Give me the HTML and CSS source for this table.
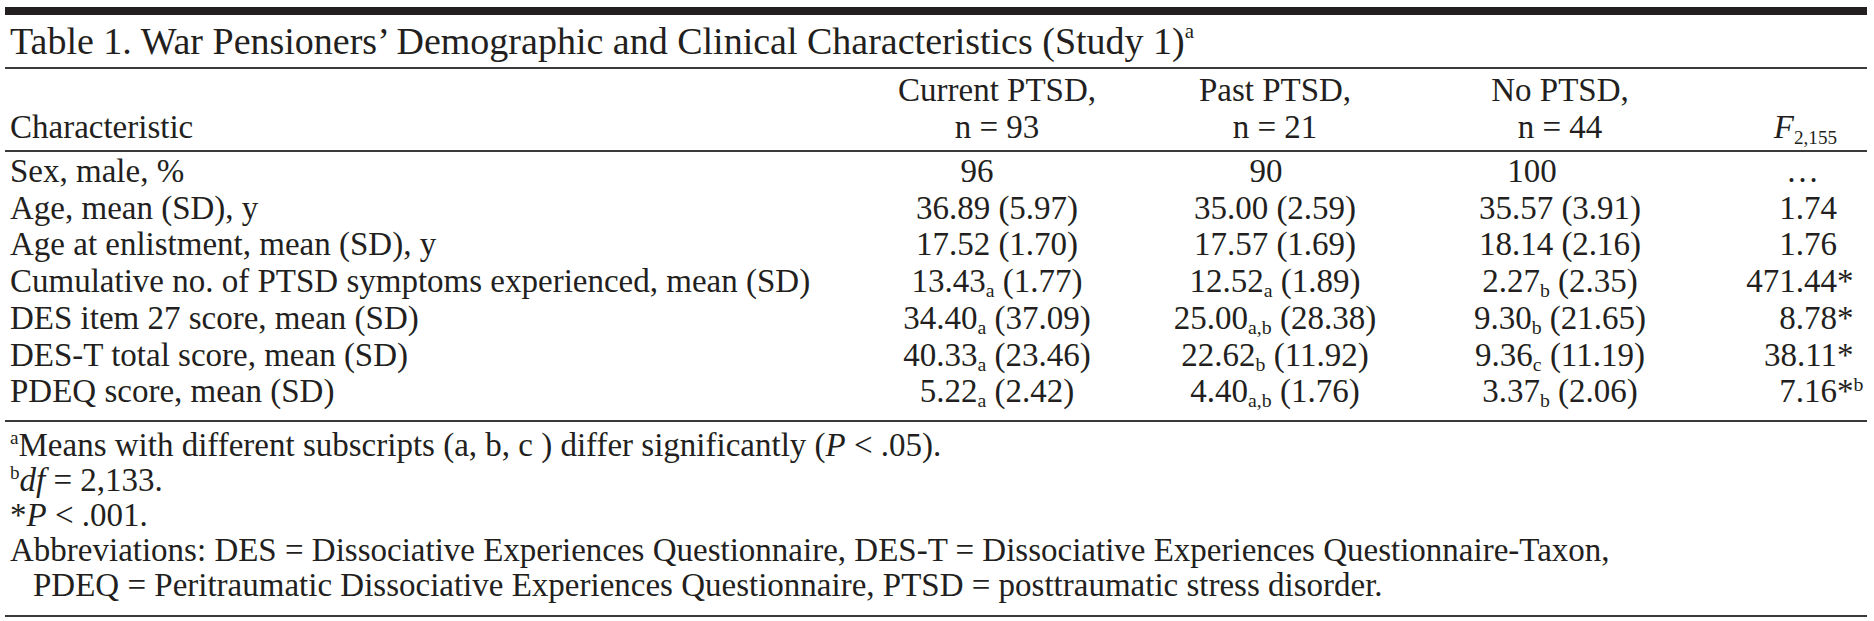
FILE: index.html
```html
<!DOCTYPE html>
<html lang="en">
<head>
<meta charset="utf-8">
<title>Table 1</title>
<link rel="stylesheet" href="styles.css">
</head>
<body>
<div class="page">
  <div class="topbar"></div>
  <h1 class="title">Table 1. War Pensioners’ Demographic and Clinical Characteristics (Study 1)<sup>a</sup></h1>
  <table class="data">
    <colgroup>
      <col class="c0"><col class="c1"><col class="c2"><col class="c3"><col class="c4">
    </colgroup>
    <thead>
      <tr>
        <th class="lbl">Characteristic</th>
        <th>Current PTSD,<br>n = 93</th>
        <th>Past PTSD,<br>n = 21</th>
        <th>No PTSD,<br>n = 44</th>
        <th class="fcol"><i>F</i><sub class="fsub">2,155</sub></th>
      </tr>
    </thead>
    <tbody>
      <tr>
        <td class="lbl">Sex, male, %</td>
        <td class="int-a">96</td><td class="int-b">90</td><td class="int-c">100</td>
        <td class="fcol"><span class="ell">…</span></td>
      </tr>
      <tr>
        <td class="lbl">Age, mean (SD), y</td>
        <td>36.89 (5.97)</td><td>35.00 (2.59)</td><td>35.57 (3.91)</td>
        <td class="fcol">1.74</td>
      </tr>
      <tr>
        <td class="lbl">Age at enlistment, mean (SD), y</td>
        <td>17.52 (1.70)</td><td>17.57 (1.69)</td><td>18.14 (2.16)</td>
        <td class="fcol">1.76</td>
      </tr>
      <tr>
        <td class="lbl">Cumulative no. of PTSD symptoms experienced, mean (SD)</td>
        <td>13.43<sub>a</sub> (1.77)</td><td>12.52<sub>a</sub> (1.89)</td><td>2.27<sub>b</sub> (2.35)</td>
        <td class="fcol">471.44<span class="hang">*</span></td>
      </tr>
      <tr>
        <td class="lbl">DES item 27 score, mean (SD)</td>
        <td>34.40<sub>a</sub> (37.09)</td><td>25.00<sub>a,b</sub> (28.38)</td><td>9.30<sub>b</sub> (21.65)</td>
        <td class="fcol">8.78<span class="hang">*</span></td>
      </tr>
      <tr>
        <td class="lbl">DES-T total score, mean (SD)</td>
        <td>40.33<sub>a</sub> (23.46)</td><td>22.62<sub>b</sub> (11.92)</td><td>9.36<sub>c</sub> (11.19)</td>
        <td class="fcol">38.11<span class="hang">*</span></td>
      </tr>
      <tr>
        <td class="lbl">PDEQ score, mean (SD)</td>
        <td>5.22<sub>a</sub> (2.42)</td><td>4.40<sub>a,b</sub> (1.76)</td><td>3.37<sub>b</sub> (2.06)</td>
        <td class="fcol">7.16<span class="hang">*<sup>b</sup></span></td>
      </tr>
    </tbody>
  </table>
  <div class="notes">
    <p><sup>a</sup>Means with different subscripts (a, b, c ) differ significantly (<i>P</i> &lt; .05).</p>
    <p><sup>b</sup><i>df</i> = 2,133.</p>
    <p>*<i>P</i> &lt; .001.</p>
    <p class="abbr">Abbreviations: DES = Dissociative Experiences Questionnaire, DES-T = Dissociative Experiences Questionnaire-Taxon,<br>PDEQ = Peritraumatic Dissociative Experiences Questionnaire, PTSD = posttraumatic stress disorder.</p>
  </div>
</div>
</body>
</html>
```

FILE: styles.css
```css
html, body {
  margin: 0;
  padding: 0;
  background: #ffffff;
}

body {
  font-family: "Liberation Serif", "Times New Roman", serif;
  color: #231f20;
}

.page {
  padding: 7px 7px 0 5px;
}

.topbar {
  height: 8px;
  background: #231f20;
}

.title {
  margin: 0;
  padding-left: 5px;
  font-size: 38px;
  font-weight: normal;
  line-height: 52px;
  white-space: nowrap;
  border-bottom: 2px solid #3a3a3a;
}

.title sup {
  font-size: 0.55em;
  line-height: 0;
  vertical-align: 0.75em;
}

.data {
  width: 100%;
  border-collapse: collapse;
  table-layout: fixed;
  font-size: 33px;
}

.c0 { width: 865px; }
.c1 { width: 254px; }
.c2 { width: 302px; }
.c3 { width: 268px; }
.c4 { width: 173px; }

.data th {
  font-weight: normal;
  line-height: 37px;
  padding: 3px 0 4px;
  vertical-align: bottom;
  text-align: center;
  border-bottom: 2px solid #3a3a3a;
}

.data td {
  line-height: 36.7px;
  padding: 0;
  text-align: center;
  white-space: nowrap;
}

.data .lbl {
  text-align: left;
  padding-left: 5px;
}

.data .fcol {
  text-align: right;
  padding-right: 30px;
}

.data tbody tr:first-child td {
  padding-top: 1px;
}

.data tbody tr:last-child td {
  padding-bottom: 10px;
  border-bottom: 2px solid #3a3a3a;
}

.data td.int-a { padding-right: 40px; }
.data td.int-b { padding-right: 18px; }
.data td.int-c { padding-right: 56px; }

.data sub {
  font-size: 0.6em;
  line-height: 0;
  vertical-align: -5px;
}

.data .fsub {
  font-size: 0.58em;
  vertical-align: -6px;
}

.hang {
  display: inline-block;
  width: 0;
  text-align: left;
  white-space: nowrap;
}

.hang sup {
  font-size: 0.6em;
  line-height: 0;
  vertical-align: 0.55em;
}

.ell {
  margin-right: 18px;
}

.notes {
  font-size: 33px;
  line-height: 35px;
  padding: 6px 0 12px 5px;
  border-bottom: 2px solid #3a3a3a;
}

.notes p {
  margin: 0;
  white-space: nowrap;
}

.notes sup {
  font-size: 0.58em;
  line-height: 0;
  vertical-align: 0.62em;
}

.notes .abbr {
  padding-left: 23px;
  text-indent: -23px;
}
```
